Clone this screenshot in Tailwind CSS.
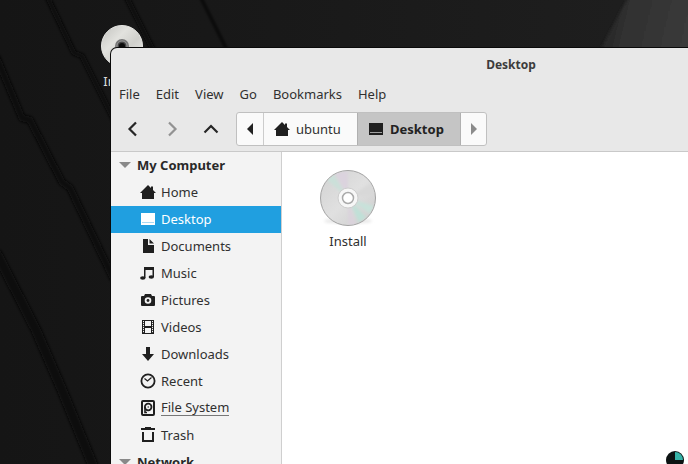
<!DOCTYPE html>
<html lang="en">
<head>
<meta charset="utf-8">
<title>Desktop</title>
<script src="https://cdn.jsdelivr.net/npm/@tailwindcss/browser@4"></script>
</head>
<body class="relative h-screen overflow-hidden bg-[#161616] font-['Noto_Sans','Open_Sans',sans-serif] text-[13px] leading-5 text-[#303030]">

<!-- Wallpaper -->
<svg class="absolute inset-0 h-full w-full" viewBox="0 0 688 464" preserveAspectRatio="xMinYMin slice" aria-hidden="true">
  <defs>
    <filter id="soft"><feGaussianBlur stdDeviation="1.5"/></filter>
    <linearGradient id="glow" x1="0" y1="0" x2="1" y2="0.15">
      <stop offset="0" stop-color="#1f1f1f"/><stop offset=".35" stop-color="#303030"/><stop offset="1" stop-color="#3a3a3a"/>
    </linearGradient>
    <linearGradient id="base" x1="0" y1="0" x2="1" y2="0">
      <stop offset="0" stop-color="#151515"/><stop offset="1" stop-color="#1f1f1f"/>
    </linearGradient>
  </defs>
  <rect width="688" height="464" fill="url(#base)"/>
  <path d="M630 -6H694V54H598Z" fill="url(#glow)" filter="url(#soft)"/>
  <g fill="none" stroke="#080808" stroke-linejoin="round" filter="url(#soft)">
    <path d="M47 -4L74 53L82 56L115 122" stroke-width="5"/>
    <path d="M126 -4L154 52" stroke-width="5"/>
    <path d="M200 -4L228 52" stroke-width="2"/>
    <path d="M-4 56L22 118L30 120L62 182L70 188L114 280" stroke-width="7"/>
    <path d="M-4 252L36 330L62 390L94 468" stroke-width="10"/>
  </g>
</svg>

<!-- Desktop launcher -->
<a href="#" class="absolute left-[101px] top-[25px] w-[42px] text-center text-[#dddddd]">
  <svg class="h-[42px] w-[42px]" viewBox="0 0 42 42" aria-hidden="true">
    <defs><linearGradient id="disc" x1="0" y1="0" x2="1" y2="1"><stop offset="0" stop-color="#c2c2be"/><stop offset=".35" stop-color="#e2e2de"/><stop offset=".6" stop-color="#d0d0cc"/><stop offset="1" stop-color="#f0f0ee"/></linearGradient></defs>
    <circle cx="21" cy="21" r="20.5" fill="url(#disc)" stroke="#e6e6e3"/>
    <circle cx="21" cy="21" r="7" fill="#777"/>
    <circle cx="21" cy="21" r="5" fill="#444" stroke="#999"/>
    <circle cx="21" cy="21" r="3" fill="#0b0b0b"/>
  </svg>
  <span class="mt-1 block">Install</span>
</a>

<!-- File manager window -->
<div class="absolute bottom-0 left-[111px] top-12 flex w-[800px] flex-col overflow-hidden rounded-t-md bg-[#e8e8e8] shadow-[0_0_0_1px_#0a0a0a]">
  <header class="flex h-[34px] shrink-0 items-center justify-center">
    <h1 class="text-xs font-bold text-[#3c3c3c]">Desktop</h1>
  </header>

  <nav class="flex h-6 shrink-0 items-center gap-4 px-2" aria-label="Menu">
    <button>File</button>
    <button>Edit</button>
    <button>View</button>
    <button>Go</button>
    <button>Bookmarks</button>
    <button>Help</button>
  </nav>

  <div class="flex h-[46px] shrink-0 items-center border-b border-[#c9c9c9] pl-[14px] pt-[1px]">
    <div class="flex gap-[23px]">
      <button aria-label="Back"><svg class="size-4" viewBox="0 0 16 16" fill="none" stroke="#262626" stroke-width="2.200"><path d="M11 1.500L4.500 8L11 14.500"/></svg></button>
      <button aria-label="Forward" disabled><svg class="size-4" viewBox="0 0 16 16" fill="none" stroke="#929292" stroke-width="2.200"><path d="M5 1.500L11.500 8L5 14.500"/></svg></button>
      <button aria-label="Up"><svg class="size-4" viewBox="0 0 16 16" fill="none" stroke="#262626" stroke-width="2.200"><path d="M1.500 11.500L8 5L14.500 11.500"/></svg></button>
    </div>
    <div class="ml-[17px] flex h-[34px] overflow-hidden rounded-[3px] border border-[#c0c0c0] bg-[#fafafa]">
      <button class="flex w-[27px] items-center justify-center border-r border-[#cccccc]" aria-label="Scroll path left"><svg class="h-3 w-2" viewBox="0 0 8 12"><path d="M7 0V12L1 6Z" fill="#222"/></svg></button>
      <button class="flex w-[93px] items-center gap-[6px] pl-[10px]">
        <svg class="size-4" viewBox="0 0 16 16" fill="#1f1f1f"><path d="M8 1L11 4V2.500H13V6L16 9H14V15H2V9H0Z"/></svg>
        ubuntu
      </button>
      <button class="flex w-[104px] items-center gap-[6px] border-x border-[#b0b0b0] bg-[#c5c5c5] pl-[10px] font-bold text-[#222222]">
        <svg class="size-4" viewBox="0 0 16 16" fill="#1f1f1f"><path d="M1 2H15V14H1Z"/><path d="M2 11H14V12H2Z" fill="#a0a0a0"/></svg>
        Desktop
      </button>
      <button class="flex w-[25px] items-center justify-center" aria-label="Scroll path right" disabled><svg class="h-3 w-2" viewBox="0 0 8 12"><path d="M1 0V12L7 6Z" fill="#8b8b8b"/></svg></button>
    </div>
  </div>

  <div class="flex min-h-0 flex-1">
    <aside class="w-[171px] shrink-0 overflow-hidden border-r border-[#cfcfcf] bg-[#f3f3f3]">
      <h2><button class="flex h-[27px] w-full items-center gap-[6px] pb-0.5 pl-2 font-bold text-[#292929]"><svg class="h-[6px] w-3" viewBox="0 0 12 6"><path d="M0 0H12L6 6Z" fill="#898989"/></svg>My Computer</button></h2>
      <ul>
        <li><a href="#" class="flex h-[27px] items-center gap-[5px] pb-0.5 pl-[29px]">
          <svg class="size-4" viewBox="0 0 16 16" fill="#1f1f1f"><path d="M8 1L11 4V2.500H13V6L16 9H14V15H2V9H0Z"/></svg>Home</a></li>
        <li><a href="#" aria-current="page" class="flex h-[27px] items-center gap-[5px] bg-[#209fe0] pb-0.5 pl-[29px] text-white">
          <svg class="size-4" viewBox="0 0 16 16" fill="#fff"><path d="M1 2H15V14H1Z"/><path d="M2 11H14V12H2Z" fill="#a8d9f3"/></svg>Desktop</a></li>
        <li><a href="#" class="flex h-[27px] items-center gap-[5px] pb-0.5 pl-[29px]">
          <svg class="size-4" viewBox="0 0 16 16" fill="#1f1f1f"><path d="M3 1H8V7H14V15H3ZM9.500 1L14 5.500H9.500Z"/></svg>Documents</a></li>
        <li><a href="#" class="flex h-[27px] items-center gap-[5px] pb-0.5 pl-[29px]">
          <svg class="size-4" viewBox="0 0 16 16" fill="#1f1f1f"><path d="M4 2H14V12H12.500V5H5.500V13H4Z"/><ellipse cx="2.800" cy="13" rx="2.700" ry="1.800"/><ellipse cx="11.300" cy="12" rx="2.700" ry="1.800"/></svg>Music</a></li>
        <li><a href="#" class="flex h-[27px] items-center gap-[5px] pb-0.5 pl-[29px]">
          <svg class="size-4" viewBox="0 0 16 16" fill="#1f1f1f"><path fill-rule="evenodd" d="M5 2H11L12 4H14Q15 4 15 5V13Q15 14 14 14H2Q1 14 1 13V5Q1 4 2 4H4ZM8 5.200A3.300 3.300 0 1 0 8 11.800A3.300 3.300 0 1 0 8 5.200Z"/><circle cx="8" cy="8.500" r="1.400"/></svg>Pictures</a></li>
        <li><a href="#" class="flex h-[27px] items-center gap-[5px] pb-0.5 pl-[29px]">
          <svg class="size-4" viewBox="0 0 16 16"><path d="M2 1H14V15H2Z" fill="#1f1f1f"/><path d="M5 2H11V7H5ZM5 9H11V14H5Z" fill="#f3f3f3"/><path d="M3.500 2V14M12.500 2V14" stroke="#f3f3f3" stroke-width="1" stroke-dasharray="1.200 .8"/></svg>Videos</a></li>
        <li><a href="#" class="flex h-[27px] items-center gap-[5px] pb-0.5 pl-[29px]">
          <svg class="size-4" viewBox="0 0 16 16" fill="#1f1f1f"><path d="M6 1H10V8H14L8 15L2 8H6Z"/></svg>Downloads</a></li>
        <li><a href="#" class="flex h-[27px] items-center gap-[5px] pb-0.5 pl-[29px]">
          <svg class="size-4" viewBox="0 0 16 16" fill="none" stroke="#1f1f1f"><circle cx="8" cy="8" r="6.600" stroke-width="1.800"/><path d="M4.500 5.500L7.500 8L11.500 4.500" stroke-width="1.200"/></svg>Recent</a></li>
        <li><a href="#" class="flex h-[27px] items-center gap-[5px] pb-0.5 pl-[29px]">
          <svg class="size-4" viewBox="0 0 16 16" fill="none" stroke="#1f1f1f"><rect x="2" y="1" width="12" height="14" rx="1" stroke-width="2"/><circle cx="8.200" cy="7" r="3.300" stroke-width="1.800"/><path d="M5 7V12.500H7" stroke-width="1.600"/><circle cx="8.200" cy="7" r=".7" fill="#1f1f1f" stroke="none"/></svg><span class="border-b border-[#777777] leading-4">File System</span></a></li>
        <li><a href="#" class="flex h-[27px] items-center gap-[5px] pb-0.5 pl-[29px]">
          <svg class="size-4" viewBox="0 0 16 16" fill="none" stroke="#1f1f1f" stroke-width="2"><path d="M1 2H15M5 1H11M3 5V14H13V5"/></svg>Trash</a></li>
      </ul>
      <h2><button class="flex h-[27px] w-full items-center gap-[6px] pb-0.5 pl-2 font-bold text-[#292929]"><svg class="h-[6px] w-3" viewBox="0 0 12 6"><path d="M0 0H12L6 6Z" fill="#898989"/></svg>Network</button></h2>
    </aside>

    <main class="flex-1 bg-white pl-[38px] pt-[17px]">
      <a href="#" class="flex w-14 flex-col items-center gap-1">
        <svg class="h-[58px] w-14" viewBox="0 0 56 58" aria-hidden="true">
          <defs>
            <linearGradient id="cd" x1="0" y1="0" x2="1" y2="1"><stop offset="0" stop-color="#d2d2d2"/><stop offset=".5" stop-color="#e0e0e0"/><stop offset="1" stop-color="#cccccc"/></linearGradient>
            <filter id="haze"><feGaussianBlur stdDeviation="1.5"/></filter>
            <clipPath id="face"><circle cx="28" cy="29" r="27"/></clipPath>
          </defs>
          <ellipse cx="28" cy="52" rx="24" ry="3" fill="#e8e8e8" filter="url(#haze)"/>
          <circle cx="28" cy="29" r="27.500" fill="url(#cd)" stroke="#a2a2a2"/>
          <g clip-path="url(#face)" filter="url(#haze)">
            <path d="M28 29L6 10L13 4Z" fill="#cbe0d9"/>
            <path d="M28 29L15 4L28 2Z" fill="#dbd3de"/>
            <path d="M28 29L54 37L50 45Z" fill="#c8e2da"/>
            <path d="M28 29L46 48L39 54Z" fill="#bfe0d7"/>
            <path d="M28 29L36 56L28 56Z" fill="#dad3dc"/>
            <path d="M28 29L52 14L55 25Z" fill="#d8d8d8"/>
          </g>
          <circle cx="28" cy="29" r="10" fill="#f7f7f7" stroke="#cdcdcd"/>
          <circle cx="28" cy="29" r="5.500" fill="#fff" stroke="#aaa" stroke-width="1.500"/>
        </svg>
        <span>Install</span>
      </a>
    </main>
  </div>
</div>

<!-- Busy pointer -->
<svg class="absolute left-[666px] top-[451px] size-[18px]" viewBox="0 0 18 18" aria-label="Busy">
  <circle cx="9" cy="9" r="9" fill="#0c1212"/>
  <path d="M9 9V1A8 8 0 0 1 17 9Z" fill="#36b3a8"/>
</svg>
</body>
</html>
